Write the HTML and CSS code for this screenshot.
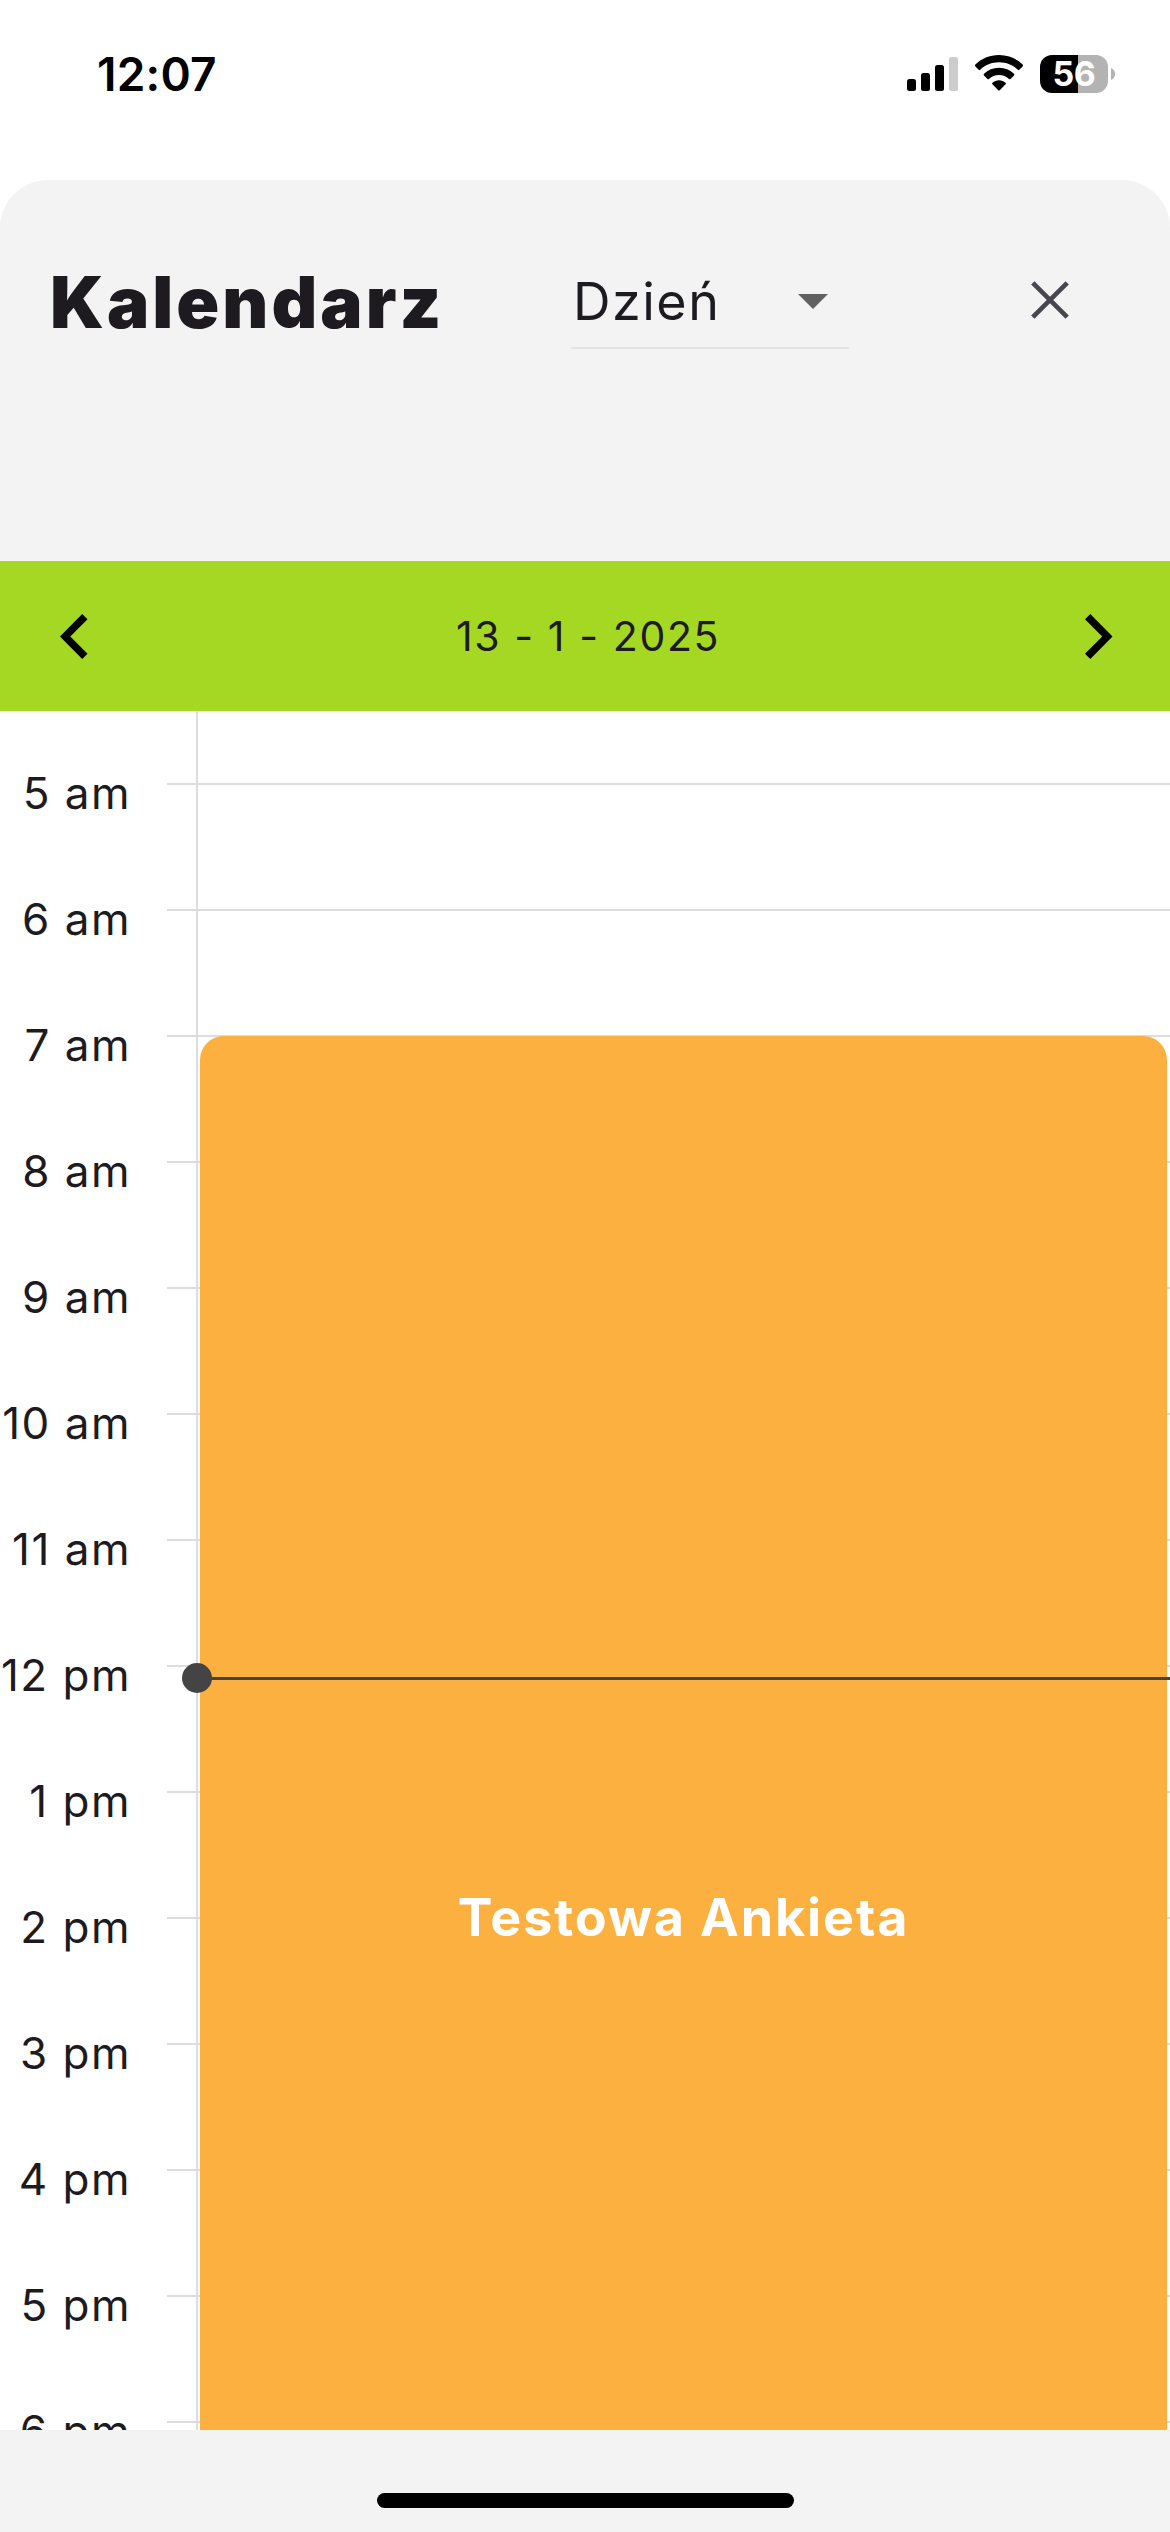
FILE: index.html
```html
<!DOCTYPE html>
<html lang="pl">
<head>
<meta charset="utf-8">
<title>Kalendarz</title>
<link rel="stylesheet" href="styles.css">
</head>
<body>
<header class="status">
  <span class="clock">12:07</span>
  <div class="indicators">
    <svg class="signal" width="52" height="36" viewBox="0 0 52 36"><rect y="24" width="9" height="12" rx="2.5"/><rect x="14" y="18" width="9" height="18" rx="2.5"/><rect x="28" y="10" width="9" height="26" rx="2.5"/><rect x="42" y="2" width="9" height="34" rx="2.5" fill="#ccc"/></svg>
    <svg class="wifi" width="48" height="36" viewBox="0 0 48 36"><path d="M24 0C33.400 0 41.700 3.700 47.600 9.600Q48.500 10.500 47.600 11.400L44.300 14.800Q43.600 15.500 42.800 14.700C37.900 10 31.300 7.300 24 7.300S10.100 10 5.200 14.700Q4.400 15.500 3.700 14.800L.4 11.400Q-.5 10.500.4 9.600C6.300 3.700 14.600 0 24 0Z"/><path d="M24 12.800C29.900 12.800 35.100 15 39 18.700Q39.900 19.600 39 20.500L35.500 24Q34.800 24.700 34 24C31.300 21.600 27.900 20.100 24 20.100S16.700 21.600 14 24Q13.200 24.700 12.500 24L9 20.500Q8.100 19.600 9 18.700C12.900 15 18.100 12.800 24 12.800Z"/><path d="M24 25.300C26.500 25.300 28.700 26.200 30.500 27.700Q31.400 28.500 30.600 29.300L24.800 35.200Q24 36 23.200 35.200L17.400 29.300Q16.600 28.500 17.500 27.700C19.300 26.200 21.500 25.300 24 25.300Z"/></svg>
    <div class="battery"><span class="level">56</span><svg width="4" height="12" viewBox="0 0 4 12"><path d="M0 0C2.500 1 4 3.300 4 6S2.500 11 0 12Z" fill="#b3b3b3"/></svg></div>
  </div>
</header>
<main class="sheet">
  <div class="toolbar">
    <h1 class="title">Kalendarz</h1>
    <div class="select"><span class="select-value">Dzień</span><svg width="30" height="15" viewBox="0 0 30 15"><path d="M0 0H30L15 15Z" fill="#616161"/></svg></div>
    <svg class="close" width="38" height="38" viewBox="0 0 38 38"><path d="M1.800 1.800L36.200 36.200M36.200 1.800L1.800 36.200" stroke="#49454f" stroke-width="4.600" fill="none"/></svg>
  </div>
  <nav class="datebar">
    <svg width="28" height="45" viewBox="0 0 28 45"><path d="M22.200 0L27.500 5.300L10.300 22.500L27.500 39.700L22.200 45L0 22.500Z"/></svg>
    <span class="date">13 - 1 - 2025</span>
    <svg width="28" height="45" viewBox="0 0 28 45"><path d="M5.300 0L0 5.300L17.200 22.500L0 39.700L5.300 45L27.500 22.500Z"/></svg>
  </nav>
  <section class="day">
    <div class="row"><span class="hour">5 am</span><i class="line"></i></div>
    <div class="row"><span class="hour">6 am</span><i class="line"></i></div>
    <div class="row"><span class="hour">7 am</span><i class="line"></i></div>
    <div class="row"><span class="hour">8 am</span><i class="line"></i></div>
    <div class="row"><span class="hour">9 am</span><i class="line"></i></div>
    <div class="row"><span class="hour">10 am</span><i class="line"></i></div>
    <div class="row"><span class="hour">11 am</span><i class="line"></i></div>
    <div class="row"><span class="hour">12 pm</span><i class="line"></i></div>
    <div class="row"><span class="hour">1 pm</span><i class="line"></i></div>
    <div class="row"><span class="hour">2 pm</span><i class="line"></i></div>
    <div class="row"><span class="hour">3 pm</span><i class="line"></i></div>
    <div class="row"><span class="hour">4 pm</span><i class="line"></i></div>
    <div class="row"><span class="hour">5 pm</span><i class="line"></i></div>
    <div class="row"><span class="hour">6 pm</span><i class="line"></i></div>
    <div class="axis"></div>
    <div class="event"><span class="event-name">Testowa Ankieta</span></div>
    <div class="now"></div>
  </section>
  <footer class="home"><div class="home-bar"></div></footer>
</main>
</body>
</html>
```
FILE: styles.css
```css
* { box-sizing: border-box; }
body {
  margin: 0;
  width: 1170px;
  height: 2532px;
  overflow: hidden;
  background: #fff;
  color: #1d1b20;
  font-family: Inter, "Liberation Sans", sans-serif;
}
svg { display: block; flex: none; }
.status {
  height: 180px;
  padding: 46px 55px 0 97px;
  display: flex;
  justify-content: space-between;
  align-items: flex-start;
  color: #000;
}
.clock { font-size: 46px; line-height: 57px; font-weight: 600; letter-spacing: 0.2px; }
.indicators { display: flex; align-items: flex-start; padding-top: 9px; }
.wifi { margin-left: 16px; }
.battery { display: flex; align-items: center; gap: 3px; margin-left: 17px; }
.level {
  width: 68px;
  height: 38px;
  border-radius: 12px;
  background: linear-gradient(90deg, #000 38px, #b3b3b3 38px);
  color: #fff;
  font-size: 34px;
  line-height: 38px;
  font-weight: 700;
  letter-spacing: -0.5px;
  text-align: center;
}
.sheet {
  height: 2352px;
  background: #f3f3f3;
  border-radius: 48px 48px 0 0;
  overflow: hidden;
}
.toolbar {
  height: 381px;
  padding: 72px 101px 0 50px;
  display: flex;
  align-items: flex-start;
}
.title {
  margin: 0;
  width: 521px;
  font-size: 71px;
  line-height: 100px;
  font-weight: 900;
  letter-spacing: 3px;
}
.select {
  width: 278px;
  height: 97px;
  padding: 4px 21px 0 2px;
  border-bottom: 2px solid #e4e4e4;
  display: flex;
  align-items: center;
  justify-content: space-between;
}
.select-value { font-size: 52px; line-height: 60px; letter-spacing: 1.5px; }
.close { margin: 29px 0 0 auto; }
.datebar {
  height: 150px;
  padding: 0 57px 0 60px;
  background: #a5d823;
  display: flex;
  align-items: center;
  justify-content: space-between;
}
.date { padding-left: 3px; font-size: 41px; letter-spacing: 1.6px; }
.day {
  position: relative;
  height: 1719px;
  padding-top: 56px;
  background: #fff;
  overflow: hidden;
}
.row { height: 126px; display: flex; align-items: flex-start; }
.hour {
  width: 167px;
  padding-right: 36px;
  font-size: 44px;
  line-height: 53px;
  letter-spacing: 1.5px;
  text-align: right;
  white-space: nowrap;
}
.line { flex: 1; height: 2px; margin-top: 16px; background: #ddd; }
.axis { position: absolute; left: 196px; top: 0; bottom: 0; width: 2px; background: #ddd; }
.event {
  position: absolute;
  left: 200px;
  right: 3px;
  top: 325px;
  height: 1762px;
  border-radius: 24px;
  background: #fcb040;
  color: #fff;
  display: flex;
  align-items: center;
  justify-content: center;
}
.event-name { font-size: 52px; font-weight: 700; letter-spacing: 1.9px; }
.now { position: absolute; left: 197px; right: 0; top: 966px; height: 3px; background: #444; }
.now::before {
  content: "";
  position: absolute;
  left: -15px;
  top: -14px;
  width: 30px;
  height: 30px;
  border-radius: 50%;
  background: #444;
}
.home { height: 102px; padding-top: 63px; display: flex; justify-content: center; }
.home-bar { width: 417px; height: 15px; border-radius: 8px; background: #000; }
```
